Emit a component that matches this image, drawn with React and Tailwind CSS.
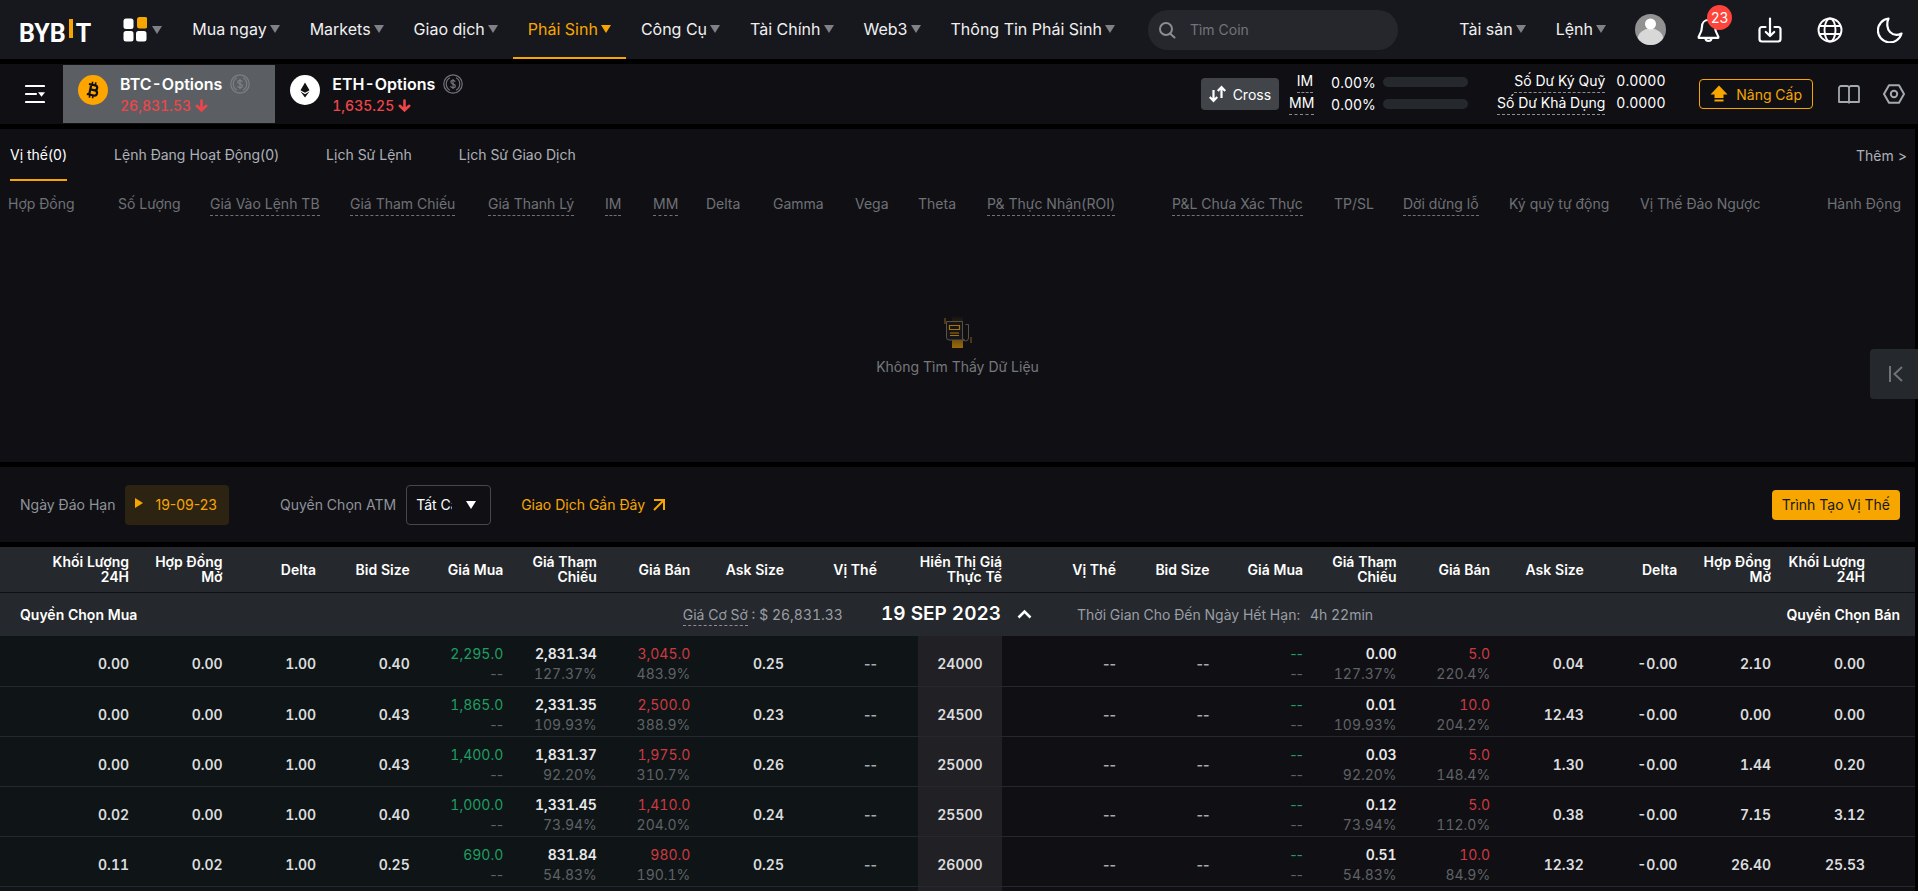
import { useState } from 'react'
import clsx from 'clsx'

const NAV = ['Mua ngay', 'Markets', 'Giao dịch', 'Phái Sinh', 'Công Cụ', 'Tài Chính', 'Web3', 'Thông Tin Phái Sinh']

const TABS = ['Vị thế(0)', 'Lệnh Đang Hoạt Động(0)', 'Lịch Sử Lệnh', 'Lịch Sử Giao Dịch']

const POSITION_COLS = [
  { label: 'Hợp Đồng', w: 'w-[118px]' },
  { label: 'Số Lượng', w: 'w-[92px]' },
  { label: 'Giá Vào Lệnh TB', w: 'w-[140px]', hint: true },
  { label: 'Giá Tham Chiếu', w: 'w-[138px]', hint: true },
  { label: 'Giá Thanh Lý', w: 'w-[117px]', hint: true },
  { label: 'IM', w: 'w-[48px]', hint: true },
  { label: 'MM', w: 'w-[53px]', hint: true },
  { label: 'Delta', w: 'w-[67px]' },
  { label: 'Gamma', w: 'w-[82px]' },
  { label: 'Vega', w: 'w-[63px]' },
  { label: 'Theta', w: 'w-[69px]' },
  { label: 'P& Thực Nhận(ROI)', w: 'w-[185px]', hint: true },
  { label: 'P&L Chưa Xác Thực', w: 'w-[162px]', hint: true },
  { label: 'TP/SL', w: 'w-[69px]' },
  { label: 'Dời dừng lỗ', w: 'w-[106px]', hint: true },
  { label: 'Ký quỹ tự động', w: 'w-[131px]' },
  { label: 'Vị Thế Đảo Ngược', w: 'w-[160px]' },
]

const CALL_HEAD = ['Khối Lượng 24H', 'Hợp Đồng Mở', 'Delta', 'Bid Size', 'Giá Mua', 'Giá Tham Chiếu', 'Giá Bán', 'Ask Size', 'Vị Thế']
const PUT_HEAD = ['Vị Thế', 'Bid Size', 'Giá Mua', 'Giá Tham Chiếu', 'Giá Bán', 'Ask Size', 'Delta', 'Hợp Đồng Mở', 'Khối Lượng 24H']

const CHAIN = [
  {
    strike: '24000',
    call: { vol: '0.00', oi: '0.00', delta: '1.00', bidSize: '0.40', bid: '2,295.0', mark: '2,831.34', iv: '127.37%', ask: '3,045.0', askIv: '483.9%', askSize: '0.25' },
    put: { mark: '0.00', iv: '127.37%', ask: '5.0', askIv: '220.4%', askSize: '0.04', delta: '-0.00', oi: '2.10', vol: '0.00' },
  },
  {
    strike: '24500',
    call: { vol: '0.00', oi: '0.00', delta: '1.00', bidSize: '0.43', bid: '1,865.0', mark: '2,331.35', iv: '109.93%', ask: '2,500.0', askIv: '388.9%', askSize: '0.23' },
    put: { mark: '0.01', iv: '109.93%', ask: '10.0', askIv: '204.2%', askSize: '12.43', delta: '-0.00', oi: '0.00', vol: '0.00' },
  },
  {
    strike: '25000',
    call: { vol: '0.00', oi: '0.00', delta: '1.00', bidSize: '0.43', bid: '1,400.0', mark: '1,831.37', iv: '92.20%', ask: '1,975.0', askIv: '310.7%', askSize: '0.26' },
    put: { mark: '0.03', iv: '92.20%', ask: '5.0', askIv: '148.4%', askSize: '1.30', delta: '-0.00', oi: '1.44', vol: '0.20' },
  },
  {
    strike: '25500',
    call: { vol: '0.02', oi: '0.00', delta: '1.00', bidSize: '0.40', bid: '1,000.0', mark: '1,331.45', iv: '73.94%', ask: '1,410.0', askIv: '204.0%', askSize: '0.24' },
    put: { mark: '0.12', iv: '73.94%', ask: '5.0', askIv: '112.0%', askSize: '0.38', delta: '-0.00', oi: '7.15', vol: '3.12' },
  },
  {
    strike: '26000',
    call: { vol: '0.11', oi: '0.02', delta: '1.00', bidSize: '0.25', bid: '690.0', mark: '831.84', iv: '54.83%', ask: '980.0', askIv: '190.1%', askSize: '0.25' },
    put: { mark: '0.51', iv: '54.83%', ask: '10.0', askIv: '84.9%', askSize: '12.32', delta: '-0.00', oi: '26.40', vol: '25.53' },
  },
]

function Caret({ className }) {
  return (
    <svg viewBox="0 0 10 8" className={clsx('h-2 w-[10px] shrink-0 fill-current', className)}>
      <path d="M0 0h10L5 8z" />
    </svg>
  )
}

function Logo() {
  return (
    <a href="#home" aria-label="Bybit" className="mt-1 flex h-[25px] items-end font-[Roboto] text-[25px] leading-5 font-bold text-white">
      <span>BYB</span>
      <span className="mx-[3px] mb-[6px] h-[19px] w-1 bg-[#f7a600]" />
      <span>T</span>
    </a>
  )
}

function NavLink({ label, active }) {
  return (
    <a
      href="#nav"
      className={clsx(
        'flex h-[59px] items-center gap-[3px] border-b-2 px-[15px] whitespace-nowrap',
        active ? 'border-[#f7a600] text-[#f7a600]' : 'border-transparent text-[#f0f0f0]',
      )}
    >
      {label}
      <Caret className={active ? '' : 'text-[#7f8186]'} />
    </a>
  )
}

function Header() {
  return (
    <header className="flex h-[59px] items-center bg-[#17181e] pr-[15px] pl-[19px] text-[16px]">
      <Logo />
      <button type="button" aria-label="Menu" className="ml-8 flex items-center gap-[5px]">
        <svg viewBox="0 0 24 25" className="h-[25px] w-6">
          <rect x="0.5" y="1.5" width="10" height="10.5" rx="2.5" fill="#fff" />
          <rect x="14" y="0" width="10.5" height="11.5" rx="2.5" fill="#f7a600" />
          <rect x="0.5" y="14" width="10" height="10.5" rx="2.5" fill="#fff" />
          <rect x="13" y="14" width="10.5" height="10.5" rx="2.5" fill="#fff" />
        </svg>
        <Caret className="text-[#7f8186]" />
      </button>
      <nav className="ml-[15px] flex items-center">
        {NAV.map((label) => (
          <NavLink key={label} label={label} active={label === 'Phái Sinh'} />
        ))}
      </nav>
      <label className="ml-[18px] flex h-10 w-[250px] items-center gap-[14px] rounded-full bg-[#26272c] pl-[10px]">
        <svg viewBox="0 0 18 18" className="size-[18px] shrink-0" fill="none" stroke="#8b8d92" strokeWidth="2">
          <circle cx="8" cy="8" r="6" />
          <path d="M12 12.5l4.5 4" strokeLinecap="round" />
        </svg>
        <input type="text" aria-label="Tìm Coin" placeholder="Tìm Coin" className="w-full min-w-0 bg-transparent text-[14px] text-white outline-none placeholder:text-[#72747a]" />
      </label>

      <div className="ml-auto flex items-center">
        <NavLink label="Tài sản" />
        <NavLink label="Lệnh" />
        <button type="button" aria-label="Tài khoản" className="ml-[14px]">
          <svg viewBox="0 0 31 31" className="size-[31px]">
            <clipPath id="avatar">
              <circle cx="15.5" cy="15.5" r="15.5" />
            </clipPath>
            <g clipPath="url(#avatar)">
              <rect width="31" height="31" fill="#929292" />
              <ellipse cx="15.5" cy="26" rx="13" ry="11.5" fill="#d8d8d8" />
              <circle cx="15.5" cy="10" r="5.5" fill="#fff" />
            </g>
          </svg>
        </button>
        <button type="button" aria-label="Thông báo" className="relative ml-[30px]">
          <svg viewBox="0 0 26 26" className="size-[26px]" fill="none" stroke="#fff" strokeWidth="2.2" strokeLinecap="round" strokeLinejoin="round">
            <path d="M12.5 3C8.5 3 6 6 6 9.5c0 5-1.500 7-3.300 10v1.300h19.600v-1.300C20.500 16.500 19 14.500 19 9.500 19 6 16.500 3 12.500 3z" />
            <path d="M9.500 21.200c0 1.600 1.300 2.600 3 2.600s3-1 3-2.600" />
          </svg>
          <span className="absolute -top-3 left-[11px] flex size-[25px] items-center justify-center rounded-full bg-[#ff443b] text-[14px] text-white">23</span>
        </button>
        <button type="button" aria-label="Tải xuống" className="ml-9">
          <svg viewBox="0 0 24 26" className="h-[26px] w-6" fill="none" stroke="#fff" strokeWidth="2.2" strokeLinecap="round" strokeLinejoin="round">
            <path d="M7.500 10H4a2.500 2.500 0 00-2.500 2.500v9.500A2.500 2.500 0 004 24.500h16a2.500 2.500 0 002.500-2.500v-9.500A2.500 2.500 0 0020 10h-3.500" />
            <path d="M12 1.500v17M7.800 15l4.200 4 4.200-4" />
          </svg>
        </button>
        <button type="button" aria-label="Ngôn ngữ" className="ml-[35px]">
          <svg viewBox="0 0 26 26" className="size-[26px]" fill="none" stroke="#fff" strokeWidth="1.9">
            <circle cx="13" cy="13" r="11.5" />
            <ellipse cx="13" cy="13" rx="5.5" ry="11.5" />
            <path d="M2.500 9h21M2.500 17h21" />
          </svg>
        </button>
        <button type="button" aria-label="Giao diện" className="ml-[34px]">
          <svg viewBox="0 0 26 26" className="size-[26px]" fill="none" stroke="#fff" strokeWidth="2.2" strokeLinejoin="round">
            <path d="M11.500 1.500A12 12 0 1024.500 16.500C20.500 18.500 16 18 13 15S9.500 6 11.500 1.500z" />
          </svg>
        </button>
      </div>
    </header>
  )
}

function UsdBadge({ className }) {
  return (
    <svg viewBox="0 0 20 20" className={clsx('size-5', className)} fill="none" stroke="currentColor" strokeWidth="1.2">
      <circle cx="10" cy="10" r="9.2" />
      <path d="M7 3.800a7 7 0 000 12.400M13 3.800a7 7 0 010 12.400" />
      <path d="M12.200 7.800c-.3-1-1.100-1.500-2.200-1.500s-2.100.6-2.100 1.700c0 2.500 4.400 1.300 4.400 3.900 0 1.200-1 1.800-2.300 1.800s-2.200-.6-2.400-1.700M10 5v10" />
    </svg>
  )
}

function DownArrow() {
  return (
    <svg viewBox="0 0 13 13" className="size-[13px]" fill="none" stroke="#ef454a" strokeWidth="2.6" strokeLinecap="round">
      <path d="M6.500 1.500v9M1.800 6.800l4.700 4.500 4.700-4.500" />
    </svg>
  )
}

function Ticker({ icon, name, price, active }) {
  return (
    <button type="button" className={clsx('flex h-[58px] items-start pt-[10px] pr-[25px] pl-[15px] text-left', active && 'bg-[#5b5f63]')}>
      {icon}
      <span className="-mt-px ml-3">
        <span className="flex h-5 items-center gap-2 text-[16px] font-semibold text-white">
          {name}
          <UsdBadge className={active ? 'text-[#7c8084]' : 'text-[#6f7277]'} />
        </span>
        <span className="mt-px flex h-5 items-center gap-1 text-[14px] font-medium text-[#ef454a]">
          {price}
          <DownArrow />
        </span>
      </span>
    </button>
  )
}

function MarginRow({ label }) {
  return (
    <div className="flex h-[22px] items-center">
      <span className="w-6 text-right">
        <span className="border-b border-dashed border-[#8b8d92] pb-[3px]">{label}</span>
      </span>
      <span className="ml-[18px] w-[44px] pt-1">0.00%</span>
      <span className="mt-[2px] ml-2 h-[10px] w-[85px] rounded-full bg-[#25282c]" />
    </div>
  )
}

function InstrumentBar() {
  return (
    <section className="mt-[5px] flex h-[60px] items-center bg-[#101014] text-[14px] text-white tabular-nums">
      <button type="button" aria-label="Danh sách" className="mr-[18px] ml-[25px]">
        <svg viewBox="0 0 20 20" className="size-5" fill="none" stroke="#fff" strokeWidth="2.2" strokeLinecap="round">
          <path d="M1 2h18M1 10h10M1 18h18" />
          <path d="M13 8.200h7l-3.500 4.600z" fill="#fff" stroke="none" />
        </svg>
      </button>
      <Ticker
        active
        name="BTC-Options"
        price="26,831.53"
        icon={
          <svg viewBox="0 0 30 30" className="size-[30px]">
            <circle cx="15" cy="15" r="15" fill="#ffa500" />
            <g transform="rotate(12 15 15)" fill="none" stroke="#111" strokeWidth="2.2">
              <path d="M9.800 10h6.400a2.400 2.400 0 010 5h-4h4.800a2.600 2.600 0 010 5.200H9.800M12.200 10v10.200" />
              <path d="M13 7v3M16.200 7v3M13 20.200v3M16.200 20.200v3" strokeWidth="1.6" />
            </g>
          </svg>
        }
      />
      <Ticker
        name="ETH-Options"
        price="1,635.25"
        icon={
          <svg viewBox="0 0 30 30" className="size-[30px]">
            <circle cx="15" cy="15" r="15" fill="#fff" />
            <path d="M15 7.500l-4.500 7.700L15 17.800l4.500-2.600zM10.500 16.600L15 22.500l4.500-5.900L15 19.200z" fill="#111" />
          </svg>
        }
      />

      <button type="button" className="ml-auto flex h-8 items-center gap-[6px] rounded bg-[#41454a] px-2">
        <svg viewBox="0 0 18 18" className="size-[18px]" fill="none" stroke="#fff" strokeWidth="2.2">
          <path d="M4.500 5v10.500M.8 12l3.700 4 3.700-4M12.500 13V2M8.800 6l3.700-4 3.700 4" />
        </svg>
        Cross
      </button>
      <div className="mb-[5px] ml-[10px]">
        <MarginRow label="IM" />
        <MarginRow label="MM" />
      </div>
      <dl className="mb-[5px] ml-[29px] grid grid-cols-[auto_48px] gap-x-[11px] text-right leading-[22px]">
        <dt>
          <span className="border-b border-dashed border-[#8b8d92] pb-[3px]">Số Dư Ký Quỹ</span>
        </dt>
        <dd>0.0000</dd>
        <dt>
          <span className="border-b border-dashed border-[#8b8d92] pb-[3px]">Số Dư Khả Dụng</span>
        </dt>
        <dd>0.0000</dd>
      </dl>
      <button type="button" className="ml-[35px] flex h-[30px] items-center gap-2 rounded border border-[#f7a600] px-[10px] text-[#f7a600]">
        <svg viewBox="0 0 18 18" className="size-[18px] fill-current">
          <path d="M9 .5l8.500 9H13.500v3.500h-9V9.500H.5zM4.500 14.500h9v2h-9z" />
        </svg>
        Nâng Cấp
      </button>
      <button type="button" aria-label="Hướng dẫn" className="ml-[25px]">
        <svg viewBox="0 0 22 19" className="h-[19px] w-[22px]" fill="none" stroke="#a4a8b0" strokeWidth="1.8" strokeLinejoin="round">
          <path d="M11 17V3a2 2 0 00-2-2H3a2 2 0 00-2 2v14zM11 17V3a2 2 0 012-2h6a2 2 0 012 2v14zM11 17v1.500" />
        </svg>
      </button>
      <button type="button" aria-label="Cài đặt" className="mr-[13px] ml-[23px]">
        <svg viewBox="0 0 22 20" className="h-5 w-[22px]" fill="none" stroke="#a4a8b0" strokeWidth="2" strokeLinejoin="round">
          <path d="M6 1.200h10L21 10l-5 8.800H6L1 10z" />
          <circle cx="11" cy="10" r="3.2" />
        </svg>
      </button>
    </section>
  )
}

function EmptyState() {
  return (
    <div className="flex flex-1 flex-col items-center pt-[101px] text-[14px] text-[#76787d]">
      <svg viewBox="0 0 28 33" className="h-[33px] w-7" fill="none">
        <defs>
          <linearGradient id="beam" x1="0" y1="0" x2="0" y2="1">
            <stop offset="0" stopColor="#8a5f08" stopOpacity="0" />
            <stop offset="1" stopColor="#9a6a08" />
          </linearGradient>
        </defs>
        <rect x="8" y="0" width="11" height="32" fill="url(#beam)" />
        <path d="M18.500 5.500h-16v16a2.500 2.500 0 002.500 2.500h15.500a2 2 0 01-2-2z" fill="#16161a" stroke="#5a5245" />
        <path d="M18.500 22a2.500 2.500 0 006 0V8.500h-3" stroke="#5a5245" />
        <path d="M5.500 9.500h10v4h-10zM6 17h9M6 19.500h9" stroke="#a87308" strokeWidth="1.2" />
        <path d="M1 2v6M27 21v6" stroke="#4a3714" strokeWidth="2" />
      </svg>
      <p className="mt-2 leading-5">Không Tìm Thấy Dữ Liệu</p>
    </div>
  )
}

function Positions() {
  const [tab, setTab] = useState(TABS[0])
  return (
    <section className="relative mt-[5px] mr-[3px] flex h-[333px] flex-col bg-[#101014] text-[14px]">
      <div className="flex items-center pr-2 pl-[10px]">
        <div role="tablist" className="flex gap-[47px]">
          {TABS.map((t) => (
            <button
              key={t}
              type="button"
              role="tab"
              aria-selected={t === tab}
              onClick={() => setTab(t)}
              className={clsx('h-[52px] border-b-2', t === tab ? 'border-[#f7a600] text-white' : 'border-transparent text-[#adb1b8]')}
            >
              {t}
            </button>
          ))}
        </div>
        <a href="#more" className="ml-auto text-[#adb1b8]">Thêm &gt;</a>
      </div>
      <table className="mt-3 w-full table-fixed text-left whitespace-nowrap text-[#6f7176]">
        <thead>
          <tr>
            {POSITION_COLS.map((c, i) => (
              <th key={c.label} className={clsx('p-0 leading-[22px] font-normal', c.w, i === 0 && 'pl-2')}>
                <span className={clsx(c.hint && 'border-b border-dashed border-[#6f7176] pb-[3px]')}>{c.label}</span>
              </th>
            ))}
            <th className="p-0 pr-[14px] text-right leading-[22px] font-normal">Hành Động</th>
          </tr>
        </thead>
      </table>
      <EmptyState />
      <button type="button" aria-label="Mở rộng" className="absolute top-[220px] -right-[3px] flex h-[50px] w-12 items-center rounded-l bg-[#25282c] pl-[19px]">
        <svg viewBox="0 0 14 16" className="h-4 w-[14px]" fill="none" stroke="#6f7277" strokeWidth="2">
          <path d="M1 0v16M13 1L5.500 8l7.500 7" />
        </svg>
      </button>
    </section>
  )
}

function Filters() {
  return (
    <section className="mt-[5px] mr-[3px] flex h-[75px] items-center bg-[#101014] pr-[15px] pl-5 text-[14px] text-[#8f939b]">
      Ngày Đáo Hạn
      <button type="button" className="ml-[10px] flex h-10 items-center gap-3 rounded bg-[#2d2313] pr-3 pl-[10px] text-[#f7a600]">
        <svg viewBox="0 0 8 10" className="mb-1 h-[10px] w-2 fill-current">
          <path d="M0 0l8 5-8 5z" />
        </svg>
        19-09-23
      </button>
      <label htmlFor="atm" className="ml-[51px]">Quyền Chọn ATM</label>
      <div className="relative ml-[10px]">
        <select id="atm" className="h-10 w-[85px] appearance-none rounded border border-[#45484d] bg-[#101014] pr-[38px] pl-[9px] text-[14px] text-white">
          <option>Tất Cả</option>
        </select>
        <Caret className="pointer-events-none absolute top-4 right-[15px] text-white" />
      </div>
      <a href="#recent" className="ml-[30px] flex items-center gap-2 text-[#f7a600]">
        Giao Dịch Gần Đây
        <svg viewBox="0 0 12 12" className="size-3" fill="none" stroke="currentColor" strokeWidth="2">
          <path d="M1 1h10v10M11 1L1 11" />
        </svg>
      </a>
      <button type="button" className="ml-auto h-[30px] rounded bg-[#f7a600] px-[10px] text-[#16171a]">Trình Tạo Vị Thế</button>
    </section>
  )
}

function Cell({ children, className = 'pr-2' }) {
  return <td className={clsx('pt-[7px] font-semibold', className)}>{children}</td>
}

// no value yet, both dashes stay close together
function Dash({ className = 'pr-2' }) {
  return <Cell className={clsx('text-[#a9abae] proportional-nums', className)}>--</Cell>
}

function Pair({ top, bottom, tone }) {
  return (
    <td className="pt-[7px] pr-2">
      <div className={clsx(tone, top === '--' && 'proportional-nums')}>{top}</div>
      <div className={clsx('text-[#5f6266]', bottom === '--' && 'proportional-nums')}>{bottom}</div>
    </td>
  )
}

const GREEN = 'text-[#1e9e62]'
const RED = 'text-[#cc3a41]'
const MARK = 'font-semibold text-[#e9e9ea]'

function ChainRow({ strike, call, put }) {
  return (
    <tr className="h-[50px] border-b border-[#25282c] leading-5 text-[#dcdddf]">
      <Cell>{call.vol}</Cell>
      <Cell>{call.oi}</Cell>
      <Cell>{call.delta}</Cell>
      <Cell>{call.bidSize}</Cell>
      <Pair top={call.bid} bottom="--" tone={GREEN} />
      <Pair top={call.mark} bottom={call.iv} tone={MARK} />
      <Pair top={call.ask} bottom={call.askIv} tone={RED} />
      <Cell>{call.askSize}</Cell>
      <Dash className="pr-[41px]" />
      <Cell className="bg-[#212125] text-center">{strike}</Cell>
      <Dash />
      <Dash />
      <Pair top="--" bottom="--" tone={GREEN} />
      <Pair top={put.mark} bottom={put.iv} tone={MARK} />
      <Pair top={put.ask} bottom={put.askIv} tone={RED} />
      <Cell>{put.askSize}</Cell>
      <Cell>{put.delta}</Cell>
      <Cell>{put.oi}</Cell>
      <Cell className="pr-[50px]">{put.vol}</Cell>
    </tr>
  )
}

function OptionChain() {
  return (
    <section className="mt-[5px] mr-[3px] bg-[#101014] text-[14px] text-white tabular-nums">
      <table className="w-full table-fixed text-right">
        <colgroup>
          <col className="w-[137px]" />
          <col span="7" />
          <col className="w-[126px]" />
          <col className="w-[84px]" />
          <col className="w-[122px]" />
          <col span="7" />
          <col className="w-[136px]" />
        </colgroup>
        <thead className="bg-[#25282c]">
          <tr className="h-[45px] border-b border-[#101014] leading-[15px]">
            {CALL_HEAD.map((h, i) => (
              <th key={h} className={clsx('font-semibold', i === 8 ? 'pr-[41px]' : 'pr-2', i === 0 && 'pl-[50px]')}>{h}</th>
            ))}
            <th className="p-0 font-semibold">Hiển Thị Giá Thực Tế</th>
            {PUT_HEAD.map((h, i) => (
              <th key={h} className={clsx('font-semibold', i === 8 ? 'pr-[50px]' : 'pr-2')}>{h}</th>
            ))}
          </tr>
          <tr className="h-11">
            <th colSpan="19" className="pr-[15px] pl-5 font-normal">
              <div className="grid grid-cols-[1fr_auto_1fr] items-center">
                <div className="flex items-center justify-between">
                  <span className="font-semibold">Quyền Chọn Mua</span>
                  <span className="text-[#9a9ea6]">
                    <span className="border-b border-dashed border-[#8b8d92] pb-[2px]">Giá Cơ Sở</span> : $ 26,831.33
                  </span>
                </div>
                <button type="button" aria-expanded="true" className="flex items-center gap-4 pr-[45px] pl-[38px] text-[19px] font-semibold">
                  19 SEP 2023
                  <svg viewBox="0 0 15 10" className="h-[10px] w-[15px]" fill="none" stroke="#fff" strokeWidth="2.6">
                    <path d="M1.500 8.500l6-6 6 6" />
                  </svg>
                </button>
                <div className="flex items-center justify-between">
                  <span className="text-[#9a9ea6]">
                    Thời Gian Cho Đến Ngày Hết Hạn: <span className="ml-[6px]">4h 22min</span>
                  </span>
                  <span className="font-semibold">Quyền Chọn Bán</span>
                </div>
              </div>
            </th>
          </tr>
        </thead>
        <tbody className="bg-linear-to-r from-[#0f1517] from-50% to-[#101014] to-50%">
          {CHAIN.map((row) => (
            <ChainRow key={row.strike} {...row} />
          ))}
          <tr className="h-[50px]">
            <td colSpan="9" />
            <td className="bg-[#212125]" />
            <td colSpan="9" />
          </tr>
        </tbody>
      </table>
    </section>
  )
}

export default function App() {
  return (
    <div className="h-screen overflow-hidden bg-black font-[Inter,'Noto_Sans',sans-serif]">
      <Header />
      <InstrumentBar />
      <Positions />
      <Filters />
      <OptionChain />
    </div>
  )
}
